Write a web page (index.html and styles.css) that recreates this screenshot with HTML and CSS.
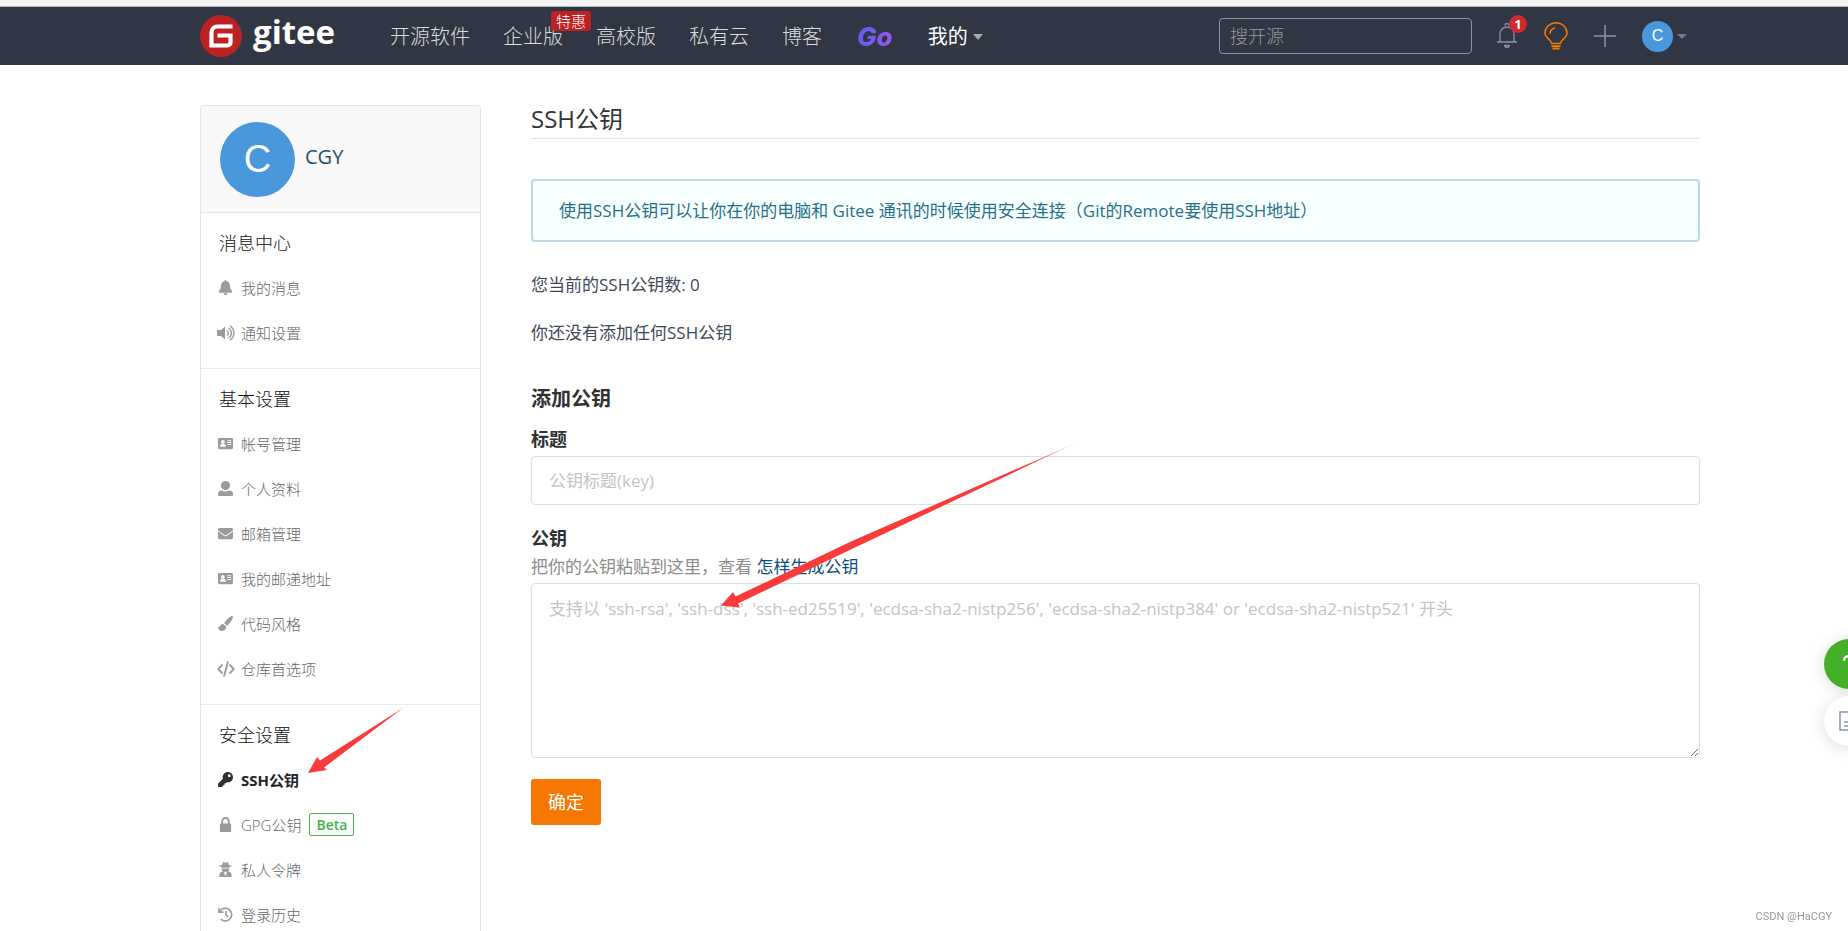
FILE: index.html
```html
<!DOCTYPE html>
<html lang="zh-CN">
<head>
<meta charset="utf-8">
<title>SSH公钥 - Gitee</title>
<link rel="stylesheet" href="styles.css">
</head>
<body>
<div class="strip"></div>
<header class="topbar">
  <a class="logo" href="#">
    <svg class="logo-mark" viewBox="0 0 42 42" aria-hidden="true"><circle cx="21" cy="21" r="21" fill="#bc2124"/><path d="M32.500 11.500H17.500a6 6 0 0 0-6 6v13H27.500a3 3 0 0 0 3-3v-7H17.500" fill="none" stroke="#fff" stroke-width="4.200"/></svg>
    <span class="logo-text">gitee</span>
  </a>
  <nav class="nav">
    <a href="#">开源软件</a>
    <a class="has-tag" href="#">企业版<span class="tag">特惠</span></a>
    <a href="#">高校版</a>
    <a href="#">私有云</a>
    <a href="#">博客</a>
    <a class="go" href="#">Go</a>
    <a class="mine" href="#">我的<i class="caret"></i></a>
  </nav>
  <div class="tools">
    <input class="search" type="search" placeholder="搜开源" aria-label="搜开源">
    <a class="notice" href="#" aria-label="通知"><svg viewBox="0 0 20 26" fill="none" stroke="#8c92a4" stroke-width="1.300"><path d="M8 2.500a2 2 0 0 1 4 0M3 18.500V11a7 7 0 0 1 14 0v7.500M0 19h20M7 22.500h6M8 22.500a2 2 0 0 0 4 0"/></svg><span class="count">1</span></a>
    <a class="bulb" href="#" aria-label="提示"><svg viewBox="0 0 24 28" fill="none" stroke="#f57900" stroke-width="1.500"><path d="M7.500 21.500c0-4-6.500-5-6.500-10.500a11 10.300 0 0 1 22 0c0 5.500-6.500 6.500-6.500 10.500zM6 12a5.500 5.500 0 0 1 5-6"/><path d="M7.500 24.200h9M8.500 26.500h7" stroke-width="1.800"/></svg></a>
    <a class="plus" href="#" aria-label="新建"><svg viewBox="0 0 22 22" stroke="#8c92a4" stroke-width="1.500"><path d="M11 0v22M0 11h22"/></svg></a>
    <a class="me" href="#"><span class="avatar-sm">C</span><i class="caret dim"></i></a>
  </div>
</header>

<div class="layout">
  <aside class="sidebar">
    <div class="profile"><span class="avatar">C</span><a href="#">CGY</a></div>
    <section class="group">
      <h2>消息中心</h2>
      <a href="#"><svg viewBox="0 0 16 16"><path d="M7 1a1 1 0 0 1 2 0c3 .7 3.800 3 4 6 .2 2.500.8 3.500 2 4.700V13.500H1v-1.800C2.200 10.500 2.800 9.500 3 7c.2-3 1-5.300 4-6zM6 14.200h4a2 2 0 0 1-4 0z"/></svg>我的消息</a>
      <a href="#"><svg class="wide" viewBox="0 0 18 16"><path d="M0 5h4l4-3.500v13L4 11H0z"/><path d="M10 5.500a3 3 0 0 1 0 5M11.500 3a5.800 5.800 0 0 1 0 10M13 .8a8.600 8.600 0 0 1 0 14.400" fill="none" stroke="currentColor" stroke-width="1.400"/></svg>通知设置</a>
    </section>
    <section class="group">
      <h2>基本设置</h2>
      <a href="#"><svg viewBox="0 0 16 16"><path fill-rule="evenodd" d="M1.500 2h13A1.500 1.500 0 0 1 16 3.500v9a1.500 1.500 0 0 1-1.500 1.500h-13A1.500 1.500 0 0 1 0 12.500v-9A1.500 1.500 0 0 1 1.500 2zM5.200 4.300a2 2 0 1 0 0 4 2 2 0 0 0 0-4zM2 11.500h6.500c0-2-.8-3-2-3H4c-1.200 0-2 1-2 3zM10 4.500v1h4v-1zm0 2v1h4v-1zm0 2v1h4v-1z"/></svg>帐号管理</a>
      <a href="#"><svg viewBox="0 0 16 16"><path d="M8 0a4.700 4.700 0 0 1 0 9.800A4.700 4.700 0 0 1 8 0zM4 10c2.500 1.500 5.500 1.500 8 0 2.500 0 4 1.500 4 3.500V15q0 1-1 1H1q-1 0-1-1v-1.500C0 11.500 1.500 10 4 10z"/></svg>个人资料</a>
      <a href="#"><svg viewBox="0 0 512 512"><path d="M502.300 190.800c3.900-3.100 9.700-.2 9.700 4.700V400c0 26.500-21.500 48-48 48H48c-26.500 0-48-21.500-48-48V195.600c0-5 5.700-7.800 9.700-4.700 22.400 17.400 52.100 39.500 154.100 113.600 21.100 15.400 56.700 47.800 92.200 47.600 35.700.3 72-32.800 92.300-47.600 102-74.100 131.600-96.300 154-113.700zM256 320c23.200.4 56.600-29.200 73.400-41.400 132.700-96.300 142.800-104.700 173.400-128.700 5.800-4.500 9.200-11.500 9.200-18.900v-19c0-26.500-21.500-48-48-48H48c-26.500 0-48 21.500-48 48v19c0 7.400 3.400 14.300 9.200 18.900 30.600 23.900 40.700 32.400 173.400 128.700 16.800 12.200 50.200 41.800 73.400 41.400z"/></svg>邮箱管理</a>
      <a href="#"><svg viewBox="0 0 16 16"><path fill-rule="evenodd" d="M1.500 2h13A1.500 1.500 0 0 1 16 3.500v9a1.500 1.500 0 0 1-1.500 1.500h-13A1.500 1.500 0 0 1 0 12.500v-9A1.500 1.500 0 0 1 1.500 2zM5.200 4.300a2 2 0 1 0 0 4 2 2 0 0 0 0-4zM2 11.500h6.500c0-2-.8-3-2-3H4c-1.200 0-2 1-2 3zM10 4.500v1h4v-1zm0 2v1h4v-1zm0 2v1h4v-1z"/></svg>我的邮递地址</a>
      <a href="#"><svg viewBox="0 0 16 16"><path d="M14 .3c1-.7 2.400.4 1.800 1.700-1.300 2.800-3.500 6-6 8.300L6.500 7.500C8.500 4.800 11 2.200 14 .3zM5.500 8.500l3.200 2.800C9 14 7 16 4 16c-2.500 0-4-1.800-4-4.500 1.200.8 1.700.5 2-.8.500-1.500 1.800-2.300 3.500-2.200z"/></svg>代码风格</a>
      <a href="#"><svg class="wide" viewBox="0 0 18 16" fill="none" stroke="currentColor" stroke-width="1.900"><path d="M5.500 3.500L1.200 8l4.300 4.500M12.500 3.500L16.800 8l-4.300 4.500M11 .5L7 15.500"/></svg>仓库首选项</a>
    </section>
    <section class="group">
      <h2>安全设置</h2>
      <a class="active" href="#"><svg viewBox="0 0 512 512"><path d="M512 176c0 97.200-78.800 176-176 176-11.200 0-22.200-1.100-32.800-3.100l-24 27A24 24 0 0 1 261.200 384H224v40c0 13.300-10.700 24-24 24h-40v40c0 13.300-10.700 24-24 24H24c-13.300 0-24-10.700-24-24v-78.100c0-6.300 2.500-12.400 7-16.900l161.800-161.800C163.100 213.800 160 195.300 160 176 160 78.800 238.800 0 336 0s176 78.500 176 176zM336 128c0 26.500 21.500 48 48 48s48-21.500 48-48-21.500-48-48-48-48 21.500-48 48z"/></svg>SSH公钥</a>
      <a href="#"><svg viewBox="0 0 16 16"><path fill-rule="evenodd" d="M3.500 7V4.500a4.500 4.500 0 0 1 9 0V7h.5q1 0 1 1v7q0 1-1 1H3q-1 0-1-1V8q0-1 1-1zM5.500 7h5V4.500a2.500 2.500 0 0 0-5 0z"/></svg>GPG公钥<span class="beta">Beta</span></a>
      <a href="#"><svg viewBox="0 0 16 16"><path fill-rule="evenodd" d="M5.500 0L8 .8 10.500 0l1.300 3.500h2.700v1.300h-2V6H3.500V4.800h-2V3.500h2.700zM4 6.800h8c.2 1.600-.5 2.700-1.500 3.200 2.500 0 4 1.500 4 4V16h-13v-2c0-2.500 1.500-4 4-4C4.500 9.500 3.800 8.400 4 6.800zM6.500 10.500l.8 4.700.7-3 .7 3 .8-4.700z"/></svg>私人令牌</a>
      <a href="#"><svg viewBox="0 0 16 16" fill="none" stroke="currentColor" stroke-width="1.700"><path d="M2 4.500a6.800 6.800 0 1 1 1 8.500M8.500 4v4.500l2.500 2M1 1v4.500h5"/></svg>登录历史</a>
    </section>
  </aside>

  <main class="main">
    <h1>SSH公钥</h1>
    <p class="message">使用SSH公钥可以让你在你的电脑和 Gitee 通讯的时候使用安全连接（Git的Remote要使用SSH地址）</p>
    <p class="line">您当前的SSH公钥数: 0</p>
    <p class="line">你还没有添加任何SSH公钥</p>
    <form class="form">
      <h2>添加公钥</h2>
      <label for="title">标题</label>
      <input id="title" type="text" placeholder="公钥标题(key)">
      <label class="key-label" for="key">公钥</label>
      <p class="help">把你的公钥粘贴到这里，查看 <a href="#">怎样生成公钥</a></p>
      <textarea id="key" placeholder="支持以 'ssh-rsa', 'ssh-dss', 'ssh-ed25519', 'ecdsa-sha2-nistp256', 'ecdsa-sha2-nistp384' or 'ecdsa-sha2-nistp521' 开头"></textarea>
      <button class="submit" type="button">确定</button>
    </form>
  </main>
</div>

<svg class="arrow arrow-key" viewBox="0 0 358 168" aria-hidden="true">
  <defs><linearGradient id="fade" x1="0" x2="1"><stop offset=".85" stop-color="#fb3b3b"/><stop offset="1" stop-color="#fb3b3b" stop-opacity=".2"/></linearGradient></defs>
  <path d="M0 163.500L12 150L14.500 154.500L130 99.500L357 0L134 105.500L17 161.500L19 165.500Z" fill="url(#fade)"/>
</svg>
<svg class="arrow arrow-menu" viewBox="0 0 96 66" aria-hidden="true"><path d="M0 65L9 49L12 52.500L95 0L16 59.500L19 62Z" fill="#fb3b3b"/></svg>

<div class="floaters">
  <button class="fab ask" type="button" aria-label="帮助"><svg viewBox="0 0 20 24" fill="none" stroke="#fff" stroke-width="2.500"><path d="M4 8a6 5.500 0 1 1 8.500 5q-2.500 1-2.500 4M10 20v3"/></svg></button>
  <button class="fab note" type="button" aria-label="反馈"><svg viewBox="0 0 20 20" fill="none" stroke="#8c92a4" stroke-width="1.500"><path d="M1 1h18v18H1zM5 11h10M5 15h10"/></svg></button>
</div>
<span class="credit">CSDN @HaCGY</span>
</body>
</html>
```
FILE: styles.css
```css
* { box-sizing: border-box; }
body {
  margin: 0;
  min-height: 100vh;
  overflow: hidden;
  background: #fff;
  color: #40485b;
  font: 400 17px/24px "Open Sans", "Noto Sans CJK SC", sans-serif;
}
a { color: inherit; text-decoration: none; }
h1, h2, p { margin: 0; }
input, textarea, button { font: inherit; }

.strip { height: 7px; background: #f3f3f3; border-bottom: 1px solid #b4bab8; }
.topbar {
  display: flex;
  align-items: center;
  height: 58px;
  padding: 0 161px 0 200px;
  background: #303643;
}
.logo { display: flex; align-items: center; gap: 11px; width: 190px; color: #fff; }
.logo-mark { width: 42px; height: 42px; }
.logo-text { font-size: 33px; font-weight: 700; line-height: 40px; padding-bottom: 8px; }
.nav { display: flex; align-items: center; gap: 33px; padding-top: 2px; color: #dcdcdc; font-size: 20px; font-weight: 300; line-height: 28px; white-space: nowrap; }
.has-tag { position: relative; }
.tag {
  position: absolute;
  top: -12px;
  left: 48px;
  padding: 0 5px;
  border-radius: 3px;
  background: #bc2124;
  color: #fff;
  font-size: 15px;
  line-height: 20px;
}
.go {
  padding: 0 2px;
  background: linear-gradient(90deg, #5d5ff5, #9b55ec);
  background-clip: text;
  color: transparent;
  font-family: Inter, sans-serif;
  font-size: 26px;
  font-style: italic;
  font-weight: 800;
}
.mine { display: flex; align-items: center; gap: 5px; color: #fff; font-weight: 400; }
.caret { border: 5px solid transparent; border-top: 6px solid #aaa; border-bottom: 0; }
.caret.dim { border-top: 5px solid #76798c; }
.tools { display: flex; align-items: center; margin-left: auto; }
.tools a { display: flex; align-items: center; }
.search {
  width: 253px;
  height: 36px;
  margin-right: 25px;
  padding: 0 10px;
  border: 1px solid #8c92a4;
  border-radius: 4px;
  background: transparent;
  color: #fff;
  font-size: 18px;
  font-weight: 300;
}
.search::placeholder { color: #999; opacity: 1; }
.notice { position: relative; margin-right: 27px; }
.notice svg { width: 20px; height: 26px; }
.count {
  position: absolute;
  top: -8px;
  left: 12px;
  width: 18px;
  height: 18px;
  border-radius: 50%;
  background: #cf2a30;
  color: #fff;
  font-size: 13px;
  font-weight: 700;
  line-height: 18px;
  text-align: center;
}
.bulb { margin-right: 26px; }
.bulb svg { width: 24px; height: 28px; }
.plus { margin-right: 26px; }
.plus svg { width: 22px; height: 22px; }
.me { gap: 4px; }
.avatar-sm, .avatar {
  display: grid;
  place-items: center;
  border-radius: 50%;
  background: #4a97dc;
  color: #fff;
  font-family: "Liberation Sans", sans-serif;
  font-weight: 400;
}
.avatar-sm { width: 31px; height: 31px; font-size: 16px; }
.avatar { width: 75px; height: 75px; font-size: 38px; }

.layout { display: flex; align-items: flex-start; gap: 50px; padding: 40px 148px 0 200px; }
.sidebar { flex: 0 0 281px; border: 1px solid #dfe5ea; border-radius: 4px; overflow: hidden; }
.profile {
  display: flex;
  align-items: center;
  gap: 10px;
  height: 107px;
  padding: 0 19px;
  border-bottom: 1px solid #dfe5ea;
  background: #f8f8f8;
  color: #1c5070;
  font-size: 20px;
}
.profile a { padding-bottom: 5px; }
.group { padding: 8px 0 13px; font-weight: 300; }
.group + .group { border-top: 1px solid #ebebeb; }
.group h2 { padding-left: 18px; color: #111; font-size: 18px; font-weight: 300; line-height: 44px; }
.group a { display: flex; align-items: center; gap: 8px; height: 45px; padding-left: 17px; color: #666; font-size: 15px; }
.group svg { width: 15px; height: 15px; color: #9b9b9b; }
.group svg:not([fill]) { fill: currentColor; }
.group svg.wide { width: 18px; height: 16px; margin: 0 -2px 0 -1px; }
.group .active { color: #222; font-weight: 700; }
.group .active svg { color: #303030; }
.beta { padding: 0 6px; border: 1px solid #44b549; border-radius: 2px; color: #44b549; font-weight: 600; font-size: 14px; line-height: 21px; }

.main { flex: 1; min-width: 0; }
.main h1 { padding-bottom: 6px; border-bottom: 1px solid #e0e1e2; color: #333; font-size: 24px; font-weight: 400; line-height: 27px; }
.message {
  margin: 40px 0 31px;
  padding: 18px 26px 17px;
  border: 2px solid #b9dce4;
  border-radius: 4px;
  background: #f8ffff;
  color: #276f86;
}
.line { margin-bottom: 24px; }
.form { display: flex; flex-direction: column; align-items: flex-start; padding-top: 16px; }
.form h2 { color: #303030; font-size: 20px; font-weight: 700; line-height: 28px; margin-bottom: 14px; }
.form label { color: #303030; font-size: 18px; font-weight: 700; line-height: 24px; margin-bottom: 5px; }
.form input, .form textarea {
  width: 100%;
  border: 1px solid #dddfe8;
  border-radius: 4px;
  background: #fff;
  color: #333;
  padding: 0 17px;
}
.form input { height: 49px; }
.form textarea { display: block; height: 175px; padding: 13px 17px; resize: vertical; }
.form ::placeholder { color: #c4c4c4; opacity: 1; }
.form .key-label { margin: 21px 0 5px; }
.help { margin-bottom: 4px; color: #8c8c8c; }
.help a { color: #0b4f7d; }
.submit { width: 70px; height: 46px; margin-top: 21px; border: 0; border-radius: 3px; background: #f57600; color: #fff; font-size: 18px; }

.arrow { position: absolute; pointer-events: none; }
.arrow-key { left: 721px; top: 442px; width: 358px; height: 168px; }
.arrow-menu { left: 308px; top: 708px; width: 96px; height: 66px; }
.floaters { position: fixed; right: -26px; top: 639px; display: grid; gap: 7px; }
.fab { display: grid; place-items: center; width: 50px; height: 50px; padding: 0; border: 0; border-radius: 50%; box-shadow: 0 2px 16px rgba(0, 0, 0, .14); }
.fab svg { width: 20px; height: 20px; }
.ask { background: #44b029; }
.note { background: #fff; }
.credit { position: fixed; right: 16px; bottom: 7px; color: #999; font: 400 11px/14px Roboto, sans-serif; }
```
